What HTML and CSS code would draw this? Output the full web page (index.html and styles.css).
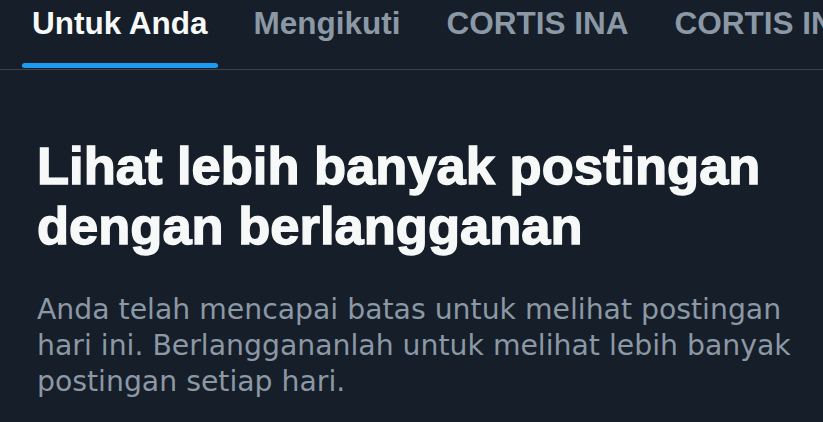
FILE: index.html
```html
<!DOCTYPE html>
<html lang="id">
    <head>
        <meta charset="UTF-8">
        <meta name="viewport" content="width=device-width,initial-scale=1">
        <title>Beranda</title>
        <link rel="stylesheet" href="styles.css">
    </head>
    <body>
        <div class="page-container">
            <nav class="tabs">
                <a class="tab active" href="#">
                    <span class="tab-label">Untuk Anda</span>
                    <span class="tab-bar"></span>
                </a>
                <a class="tab" href="#">
                    <span class="tab-label">Mengikuti</span>
                </a>
                <a class="tab" href="#">
                    <span class="tab-label">CORTIS INA</span>
                </a>
                <a class="tab" href="#">
                    <span class="tab-label">CORTIS INA</span>
                </a>
            </nav>
            <section class="limit-notice">
                <h1>Lihat lebih banyak postingan dengan berlangganan</h1>
                <p>Anda telah mencapai batas untuk melihat postingan hari ini. Berlangganan­lah untuk melihat lebih banyak postingan setiap hari.</p>
            </section>
        </div>
    </body>
</html>
```

FILE: styles.css
```css
*, *::before, *::after {
    box-sizing: border-box;
}
html, body {
    margin: 0;
    padding: 0;
    background-color: #161e29;
}
.page-container {
    width: 100vw;
    height: 100vh;
    overflow: hidden;
}
.tabs {
    display: flex;
    gap: 26px;
    height: 70px;
    padding-left: 22px;
    border-bottom: 1px solid #38444d;
    white-space: nowrap;
}
.tab {
    display: flex;
    flex-direction: column;
    padding: 3px 10px 0 10px;
    text-decoration: none;
    color: #8b98a5;
    font-family: "Liberation Sans", Arial, sans-serif;
    font-weight: bold;
    font-size: 31.5px;
    line-height: 40px;
}
.tab.active {
    color: #f7f9f9;
}
.tab-bar {
    display: block;
    height: 5px;
    margin: 20px -10px 0 -10px;
    border-radius: 3px;
    background-color: #1d9bf0;
}
.limit-notice {
    padding: 66px 30px 0 37px;
}
.limit-notice h1 {
    margin: 0;
    max-width: 750px;
    color: #f7f9f9;
    font-family: "Liberation Sans", Arial, sans-serif;
    font-weight: bold;
    font-size: 52.5px;
    line-height: 60px;
    -webkit-text-stroke: 1.4px #f7f9f9;
}
.limit-notice p {
    margin: 36px 0 0 0;
    max-width: 756px;
    color: #8b98a5;
    font-family: "DejaVu Sans", Verdana, sans-serif;
    font-size: 28.3px;
    line-height: 36px;
}
```
